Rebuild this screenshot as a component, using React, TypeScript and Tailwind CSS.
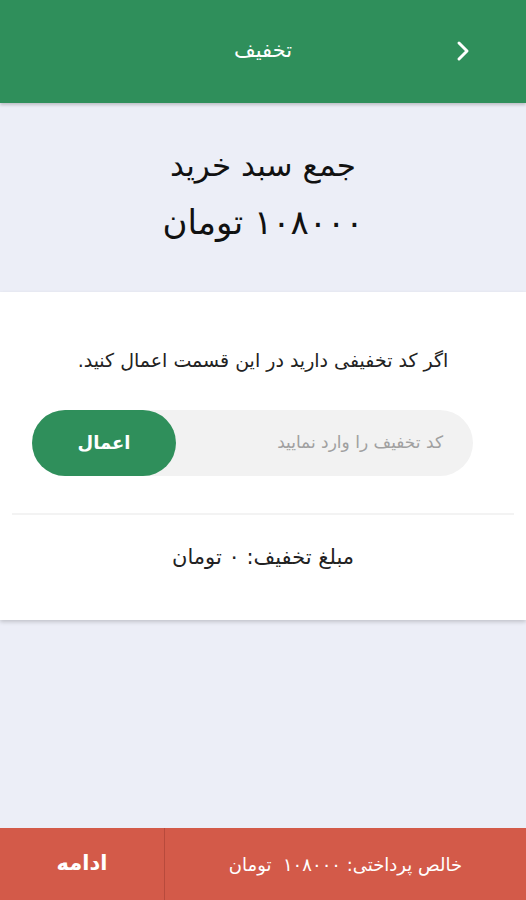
import React from "react";

export default function App() {
  const font = { fontFamily: '"DejaVu Sans", "Noto Sans", sans-serif' };
  return (
    <div dir="rtl" style={font} className="w-[526px] h-[900px] flex flex-col bg-[#eceef7] overflow-hidden">
      <header className="h-[103px] bg-[#2f8f5b] relative flex items-center justify-center shrink-0 shadow-[0_2px_3px_rgba(0,0,0,0.2)]">
        <span className="text-white text-[21px] mb-[2px]">تخفیف</span>
        <svg className="absolute right-[54px] top-[40px]" width="18" height="22" viewBox="0 0 18 22" fill="none">
          <path d="M5 3 L13 11 L5 19" stroke="white" strokeWidth="3" strokeLinecap="round" strokeLinejoin="round" />
        </svg>
      </header>
      <section className="h-[189px] flex flex-col items-center justify-center shrink-0 text-[#111]">
        <div className="text-[31px] leading-none mt-[-6px]">جمع سبد خرید</div>
        <div className="text-[34px] leading-none mt-[24px]">۱۰۸۰۰۰ تومان</div>
      </section>
      <section className="bg-white h-[328px] shrink-0 flex flex-col shadow-[0_2px_4px_rgba(0,0,0,0.18)]">
        <div className="text-[19px] text-[#222] text-center mt-[54px]">اگر کد تخفیفی دارید در این قسمت اعمال کنید.</div>
        <div className="mt-[35px] mr-[53px] ml-[32px] h-[66px] rounded-full bg-[#f2f2f2] flex items-center">
          <span className="flex-1 pr-[30px] text-[17px] text-[#a0a0a0]">کد تخفیف را وارد نمایید</span>
          <button className="h-[66px] w-[144px] rounded-full bg-[#2f8f5b] text-white text-[18px] font-bold">اعمال</button>
        </div>
        <div className="mt-[37px] mx-[12px] h-[2px] bg-[#f3f3f3]" />
        <div className="text-[21px] text-[#222] text-center mt-[27px]">مبلغ تخفیف: ۰ تومان</div>
      </section>
      <div className="flex-1" />
      <footer className="h-[72px] bg-[#d35a49] flex shrink-0 text-white">
        <div className="flex-1 flex items-center justify-center text-[18px] border-l border-[#b84a3c]">
          خالص پرداختی: ۱۰۸۰۰۰&nbsp;&nbsp;تومان
        </div>
        <div className="w-[164px] flex items-center justify-center text-[21px] font-bold">ادامه</div>
      </footer>
    </div>
  );
}
